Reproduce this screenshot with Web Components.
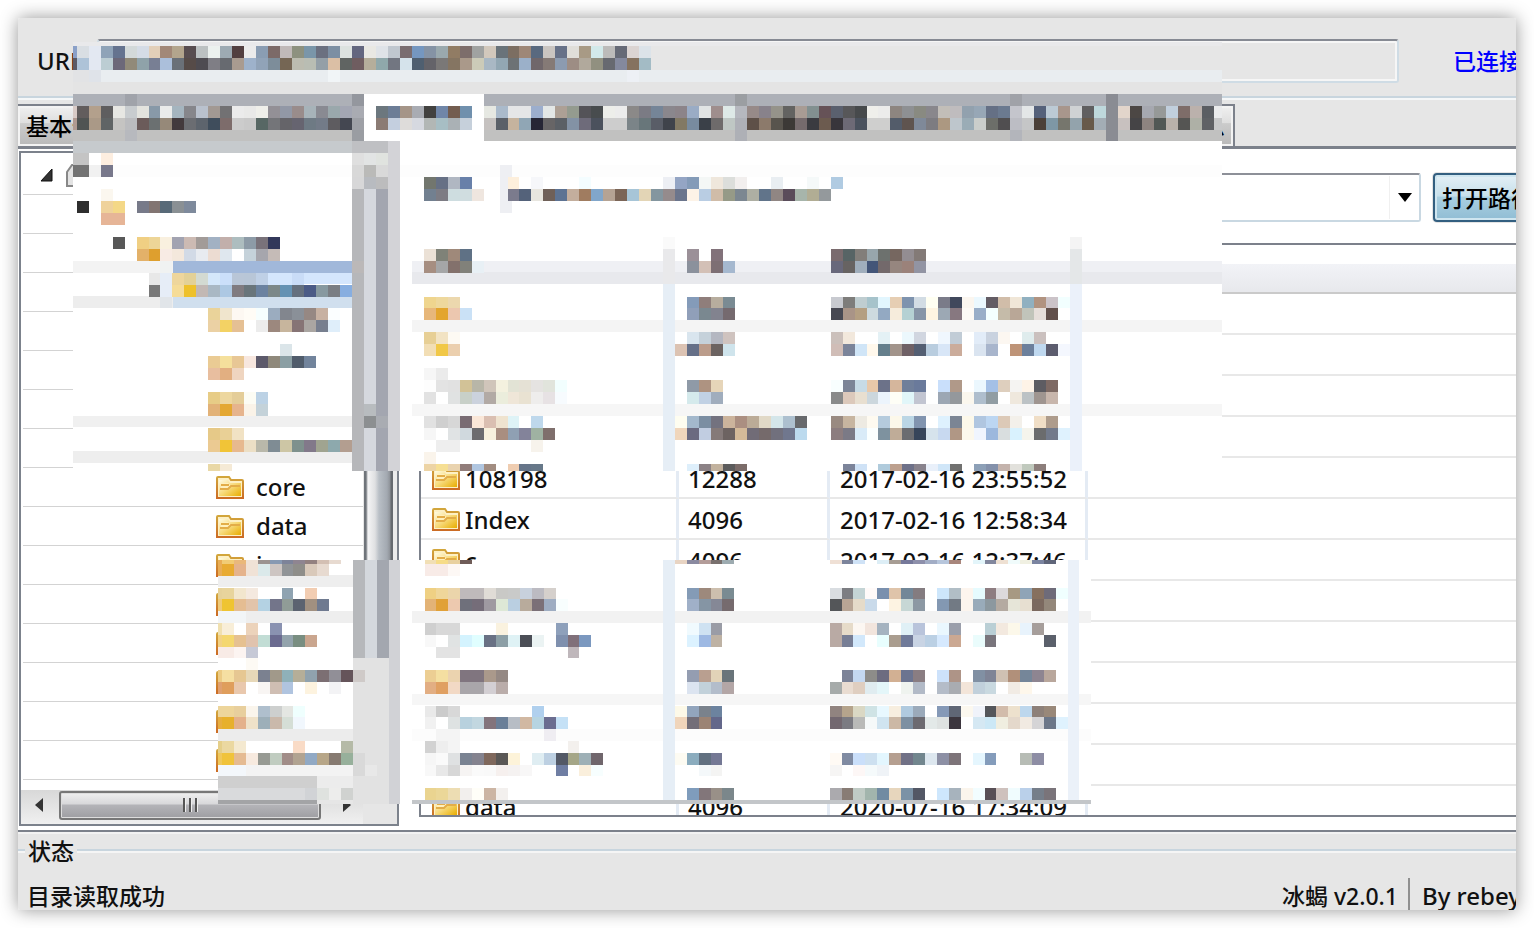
<!DOCTYPE html>
<html lang="zh-CN">
<head>
<meta charset="utf-8">
<title>冰蝎 v2.0.1</title>
<style>
html, body { margin: 0; height: 100%; background: #fff; overflow: hidden; }
body { font: 500 24px/32px "Noto Sans", "Noto Sans CJK SC", sans-serif; color: #111; }
</style>
</head>
<body>
<app-window>
  <url-bar></url-bar>
  <tab-strip></tab-strip>
  <file-manager></file-manager>
  <status-bar></status-bar>
  <pixel-mosaic slot="cover" class="upper" data-name="upper"></pixel-mosaic>
  <pixel-mosaic slot="cover" class="lower" data-name="lower"></pixel-mosaic>
</app-window>
<script>
class ShadowElement extends HTMLElement {
  constructor() {
    super();
    this.attachShadow({ mode: 'open' }).innerHTML =
      '<style>*{box-sizing:border-box}:host{display:block;box-sizing:border-box}</style>' + this.render();
  }
  render() { return ''; }
}

customElements.define('app-window', class extends ShadowElement {
  render() {
    return `<style>
      :host { padding: 18px; height: 100vh; }
      .shadow { height: 100%; border-radius: 2px; box-shadow: 0 0 18px rgba(0,0,0,.42); }
      .frame { position: relative; height: 100%; overflow: hidden; background: #e6e6e6; border-radius: 2px; }
      .content { display: flex; flex-direction: column; height: 100%; margin-right: -60px; }
      ::slotted(file-manager) { flex: 1; min-height: 0; }
      ::slotted(pixel-mosaic) { position: absolute; }
      ::slotted(.upper) { left: 55px; top: 24px; }
      ::slotted(.lower) { left: 200px; top: 542px; }
    </style>
    <div class="shadow"><div class="frame">
      <main class="content"><slot></slot></main>
      <slot name="cover"></slot>
    </div></div>`;
  }
});

customElements.define('url-bar', class extends ShadowElement {
  render() {
    return `<style>
      .bar { display: flex; align-items: center; height: 80px; padding: 8px 0 0 19px; border-bottom: 2px solid #c8d5de; box-shadow: 0 2px #f5f7f8; }
      label { width: 60px; flex: none; }
      input { flex: 1; min-width: 0; height: 44px; font: inherit; background: #e6e6e6; border: 2px solid #cfdce5; border-top-color: #868a93; border-radius: 3px; box-shadow: inset 0 0 0 2px #f6f6f6; }
      span { flex: none; width: 177px; padding-left: 54px; color: #00f; font-size: 23px; white-space: nowrap; }
    </style>
    <div class="bar"><label for="url">URL:</label><input id="url" type="text" readonly><span>已连接</span></div>`;
  }
});

customElements.define('tab-strip', class extends ShadowElement {
  render() {
    return `<style>
      div { display: flex; height: 51px; padding-top: 6px; border-bottom: 3px solid #7c818b; box-shadow: inset 0 2px #f5f7f8; }
      button { font: 500 23px/32px "Noto Sans", "Noto Sans CJK SC", sans-serif; color: #000; height: 42px; padding: 0 8px; border: 2px solid #7c818b; border-width: 2px 2px 0 0; background: linear-gradient(#f0f0f0 0, #dedede 42%, #cbcbcb 44%, #b9b9b9 100%); box-shadow: inset 0 0 0 2px #f3f3f3; white-space: nowrap; }
      .last { width: 1107px; text-align: right; }
    </style>
    <div role="tablist"><button role="tab">基本信息</button><button role="tab" class="last">更新信息</button></div>`;
  }
});

customElements.define('folder-icon', class extends ShadowElement {
  render() {
    return `<style>:host{flex:none;width:28px;height:23px}svg{display:block}</style>
    <svg width="28" height="23" viewBox="0 0 28 23" aria-hidden="true">
      <defs><linearGradient id="g" x1="0" y1="0" x2="1" y2="1"><stop offset="0" stop-color="#fffbe2"/><stop offset=".5" stop-color="#f7d978"/><stop offset="1" stop-color="#e8ad00"/></linearGradient>
      <linearGradient id="s" x1="0" y1="0" x2="0" y2="1"><stop offset="0" stop-color="#d2a63c"/><stop offset="1" stop-color="#cc6c24"/></linearGradient></defs>
      <path d="M1 22V2q0-1 1-1h11l2 3h11q1 0 1 1v17z" fill="#fdf0c4" stroke="url(#s)" stroke-width="2"/>
      <path d="M3 20V4h9l2 3h11v13z" fill="url(#g)"/>
      <path d="M5 7h7l2 2h9v2h-9l-3 2H5z" fill="#fff0bd"/>
      <path d="M5 9h8M4 13h8l3-3h9" fill="none" stroke="#e3ad48" stroke-width="2"/>
    </svg>`;
  }
});

customElements.define('directory-tree', class extends ShadowElement {
  render() {
    const names = { 8: 'core', 9: 'data', 10: 'i' };
    let rows = '';
    for (let i = 0; i < 16; i++) {
      if (i === 0) rows += `<li class="root"><svg width="14" height="14" viewBox="0 0 14 14"><path d="M12 1v12H1z" fill="#333" stroke="#111"/></svg><svg width="28" height="24" viewBox="0 0 28 24"><path d="M1 23V9l5-7h16l5 7v14z" fill="#e3e3e3" stroke="#888" stroke-width="2"/></svg></li>`;
      else if (i < 8) rows += '<li></li>';
      else rows += `<li><folder-icon></folder-icon><span>${names[i] || ''}</span></li>`;
    }
    return `<style>
      :host { display: grid; grid-template: 1fr 34px / 1fr 34px; border: 2px solid #7c828c; background: #fff; overflow: hidden; }
      ul { list-style: none; margin: 0; padding: 3px 0 0 2px; overflow: hidden; }
      li { display: flex; align-items: center; gap: 12px; height: 39px; padding-left: 193px; border-bottom: 1px solid #d3d3d3; }
      .root { padding-left: 17px; }
      .v { background: linear-gradient(90deg,#e6e6e6 0,#e6e6e6 1px,#6f747a 1px,#6f747a 3px,#f4f4f5 5px,#dfe0e2 12px,#b9bfc6 16px,#a3a9b1 24px,#8e9298 27px,#666a70 28px,#666a70 30px,#ececec 30px); }
      .h { display: flex; align-items: center; padding: 0 4px 4px 0; background: linear-gradient(#d8d8d8,#f0f0f0); }
      .h svg { flex: none; width: 38px; height: 14px; }
      .thumb { flex: 1; display: flex; justify-content: center; align-items: center; gap: 4px; height: 29px; border: 2px solid #777; border-radius: 3px; background: linear-gradient(#efefef,#d8d8da 44%,#b4b4b8 48%,#9e9ea2); box-shadow: inset 0 0 0 1px #ddd; }
      .thumb i { width: 2px; height: 14px; background: #555; box-shadow: 1px 0 #eee; }
      .corner { background: #e6e6e6; }
    </style>
    <ul>${rows}</ul><div class="v"></div>
    <div class="h"><svg viewBox="0 0 38 14"><path d="M22 0v14l-8-7z" fill="#333"/></svg><div class="thumb"><i></i><i></i><i></i></div><svg viewBox="0 0 38 14"><path d="M22 0v14l8-7z" fill="#333"/></svg></div>
    <div class="corner"></div>`;
  }
});

customElements.define('file-table', class extends ShadowElement {
  render() {
    const data = {
      4: ['108198', '12288', '2017-02-16 23:55:52'],
      5: ['Index', '4096', '2017-02-16 12:58:34'],
      6: ['c', '4096', '2017-02-16 12:37:46'],
      12: ['data', '4096', '2020-07-16 17:34:09']
    };
    let rows = '';
    for (let i = 0; i < 13; i++) {
      const d = data[i];
      rows += d ? `<tr><td><div><folder-icon></folder-icon>${d[0]}</div></td><td>${d[1]}</td><td>${d[2]}</td><td></td></tr>`
                : '<tr><td></td><td></td><td></td><td></td></tr>';
    }
    return `<style>
      :host { border: 2px solid #7c818b; border-right: 0; background: #fff; overflow: hidden; }
      table { width: 100%; table-layout: fixed; border-collapse: separate; border-spacing: 0; }
      th { height: 49px; padding: 0; background: linear-gradient(#fff 19px,#f2f3f7 19px,#e8e9ed 45px); border-bottom: 2px solid #cacaca; }
      td { height: 41px; padding: 2px 0 0 9px; line-height: 32px; border-bottom: 2px solid #e8e8e8; border-right: 3px solid #e4ebf4; white-space: nowrap; }
      td:first-child { padding-left: 11px; }
      td:last-child { border-right: 0; }
      td:nth-child(3) { padding-left: 10px; }
      div { display: flex; align-items: center; gap: 5px; }
      .name, .time { width: 258px; } .size { width: 151px; }
    </style>
    <table><colgroup><col class="name"><col class="size"><col class="time"><col></colgroup>
    <thead><tr><th></th><th></th><th></th><th></th></tr></thead><tbody>${rows}</tbody></table>`;
  }
});

customElements.define('file-manager', class extends ShadowElement {
  render() {
    return `<style>
      :host { display: flex; gap: 20px; padding: 2px 0 4px 1px; background: #fff; border-bottom: 2px solid #7c818b; }
      directory-tree { flex: none; width: 380px; }
      section { flex: 1; min-width: 0; display: flex; flex-direction: column; gap: 21px; padding: 22px 0 9px; }
      form { display: flex; gap: 12px; height: 49px; margin-left: 84px; }
      .combo { position: relative; flex: 1; }
      select { width: 100%; height: 100%; appearance: none; font: inherit; background: #fff; border: 2px solid #c9d8e2; border-top-color: #8d9098; border-radius: 3px; }
      .combo svg { position: absolute; right: 9px; top: 20px; }
      .combo::after { content: ""; position: absolute; right: 31px; top: 3px; bottom: 3px; width: 1px; background: #f0f0f0; }
      button { flex: none; width: 143px; padding: 0 7px; text-align: left; white-space: nowrap; font: 500 23px/32px "Noto Sans", "Noto Sans CJK SC", sans-serif; color: #000; border: 2px solid #335f80; border-radius: 4px; background: linear-gradient(#e4f0f6,#c7e0eb 46%,#a9cfe0 50%,#90bdd4); box-shadow: inset 0 0 0 2px #cfe6f0, 0 0 0 1px #e4e4e4; }
      file-table { flex: 1; min-height: 0; }
    </style>
    <directory-tree></directory-tree>
    <section>
      <form onsubmit="return false"><div class="combo"><select aria-label="路径"></select>
        <svg width="14" height="9" viewBox="0 0 14 9"><path d="M0 0h14L7 9z"/></svg></div>
        <button type="button">打开路径</button></form>
      <file-table></file-table>
    </section>`;
  }
});

customElements.define('status-bar', class extends ShadowElement {
  render() {
    return `<style>
      :host { height: 78px; padding: 1px 0 0; border-top: 2px solid #f2f2f2; font-size: 23px; }
      .title { display: flex; align-items: center; gap: 3px; height: 32px; }
      .title::before, .title::after { content: ""; height: 4px; border-top: 2px solid #c8d5de; border-bottom: 2px solid #f5f5f5; box-sizing: border-box; }
      .title::before { width: 7px; } .title::after { flex: 1; }
      .line { display: flex; margin-top: 11px; padding-left: 9px; height: 36px; line-height: 36px; white-space: nowrap; }
      .line span:first-child { flex: 1; }
      .by { width: 168px; margin-left: 10px; padding-left: 12px; border-left: 2px solid #909090; font-size: 24px; }
    </style>
    <div class="title"><span>状态</span></div>
    <div class="line"><span>目录读取成功</span><span>冰蝎 v2.0.1</span><span class="by">By rebeyond</span></div>`;
  }
});

/* Each mosaic: size, grid origin and pitch, flat areas [x0,y0,x1,y1,colour], then cell runs "row column colours". */
const MOSAICS = {
  upper: {
    w: 1149, h: 429, x: 3.7, y: 4, px: 11.967, py: 11.93,
    areas: [[0,0,1149,429,'fff'],[0,0,1149,28,'e6e6e6'],[0,0,1149,4,'e9e9eb'],[0,28,1149,40,'e9edf0'],[0,40,1149,52,'e4e4e4'],
      [0,52,1149,64,'adb0b7'],[0,64,1149,76,'d6d6d5'],[0,76,1149,87,'cacac9'],[0,87,1149,99,'c1c1c0'],
      [291,52,411,99,'fff'],[0,99,279,111,'c6cacd'],[279,99,315,111,'bfc0c3'],[315,99,327,111,'d0d3d8'],
      [279,111,315,147,'dadada'],[0,123,1149,135,'fdfdfd'],[0,219,279,231,'f3f3f3'],[0,254,279,266,'ededed'],[0,374,279,385,'f0f0f0'],[0,409,279,421,'eeeeee'],
      [339,219,1149,230,'eff0f4'],[339,230,1149,242,'e8e9ed'],[339,278,1149,290,'f4f4f4'],[339,362,1149,374,'f6f6f6'],
      [590,242,602,429,'e6eef6'],[590,207,602,242,'e9e9eb'],[997,242,1009,429,'ebf1fa'],[997,195,1009,242,'e4e7e8'],
      [279,147,291,429,'b6b7ba'],[291,147,303,429,'d5d8de'],[303,147,315,429,'a3a6b0'],[315,99,327,429,'d3d3d7'],
      [100,219,279,231,'a1b8da'],[100,231,279,242,'d4e6fd'],[100,254,279,266,'d0dfee'],[427,123,439,171,'eeeff3']],
    cells: `0 -1 8aa0c8 d9dee3 e3e8f2 8fa3b8 65738f d3d9d9 d5dce6 e2cfb9 a28878 b3a58d 584d50 bcc1c2 ecf1ef 9daab3 523f40 ebebeb 8a9db3 7c6a68 c0b9b8 8d917f 7a96a9 6b7080 7d8fa3 dde2e0 63667f e9e8e3 dfe3e8 c0c7cf 7a6d70 7597c0 8593a5 9aa9ae 917c64 7d6d6b a0a2a1 d2c8bc 69737a 7c6e62 9e8777 59697f cac5c1 677188 e0ded9 a89a85 d2e9ea bcbbba 666a77 dbd4d2 dce3e9
1 -1 5a5a66 aec3d8 e3e8f2 bccdd3 6c6879 918a79 8fa2a9 787f94 abbfdb 6a7078 564b48 4e4b51 7f7e85 676a70 a99b90 9eb2cb 91a3b8 7d8d9a 756654 bcbcb0 b9bdb3 949fa7 dbbfa5 606462 6f5d60 b5ae9b 8fa8ab 727681 d5e3eb 4f5f70 646369 7a7877 857562 aa998a cccbb8 a9b8c4 92a7b3 6d7275 9bb0c9 70676b 857a76 8c9bb0 9d8d84 b1a99c 919080 676970 84899e 85725f a3bbc5
2 -1 e2e3e5 e2e3e5 dfe3e9
2 21 f1f5f7
2 46 edf0f5
4 4 a0a3aa
4 23 94979e
4 55 9b9ea2
4 78 a0a2a8
4 86 8a8c93
5 -1 d8cac6 625d5d b3a08c 5f5e5f e7e7e3 c8cccf e3e3de 8899a8 eaebea a5b5bf 86868b b9c1cd a29993 727173 ebebeb e9e9e8 efefea 939096 9298a6 998c8b a7b3b9 898a92 9aa8ac a3a6b3 a9abb2 - 6c777e 6c7d96 a59588 a9acb3 42413f 7086a8 735d50 7090ad - e6e8e2 aabacb e5e6e7 e5e6e7 9caecd e3e7e6 ada095 949b8f 545358 484c4e edeeea ececec 8b8988 7b7b84 758598 8a878d 8c8489 9aacc5 e1e4e4 9f8e8d dee9e7 b6b8bf 978a88 88828b 95938a 636361 a89c94 829090 665257 5a606e 575759 474a4c efefeb ececeb 8d8580 8e9093 898a81 89878c c2beb8 bfbcbe 92a1ae 97a7b6 657085 6b7a90 c4c5cc e3e6e7 55617a bccad5 a8968c cfd2d4 605f60 bed8dc 8a8c93 e2d5cb 4c4744 a6a8b0 969998 c1cfdd 7e6d69 bbb1ac 5b5e63 eaebec
6 -1 b09a92 505453 aa9987 606465 c5c4c2 bbbcbf 6b5b5a 6b7071 968979 433a3d 6b6d72 5d646d 3f4d5c 7d6c6b cccccc c9c9c9 576764 747579 656469 666470 6e7a84 737b88 5e5c60 444751 9ea0a6 - 8b7b74 c4cfdf dedcda d6d9e0 b2b7b5 a7bec4 aab1b5 c6d0db - c6c2c0 5b6068 c5b39e 90a6b5 262635 676566 5b6066 8392a5 6e6b7a 4b515d cdcdcd cdcdcd 7b8488 68767a 595d67 3f434b 827964 788b9f 3a4048 6e6b6b bfc7c4 aeb0b7 5e5048 8c7a6b 58544d 3c3936 756b6d 3a3b40 6c5b4f 38353b 6d6a76 4a525e cfcfce cfcfce 535c6a 5f544f 7f8999 7d7c81 ac9881 bec6cc 9aacb6 cacecb 6c6e69 504e50 bcbdc4 c5c6c7 4b4038 7e97a5 76766d 93a3ac 67594a a3adb5 8a8c93 c8c1bf 454446 8e8480 525855 b9b1aa 555553 aeb0a6 5f6165 c8c9ca
7 4 b7b9be
7 23 9a9da2
7 55 aeb0b6
7 78 b3b5bb
7 86 8a8c93
9 -1 c4c4c4 c4c4c4 - fdeee0
9 23 dfdfdf e2e4e4 e0e3df
10 -1 737373 737373 f1f1f1 78788b
10 23 d8d8d8 babab8 d9d9d9
11 23 d7d7d8 b8bbc0 bcbcbd
12 2 fbf7ef
13 0 2e2e2e - efd29b f4d887 - 777a89 827572 586a78 8a9094 7e8a9c
14 2 e6b597 e6b597
16 3 585858 - f0cf83 edd597 f9f0df a2a3b1 ccbab3 a29b98 a2b1c3 c2afab adbdbf 8d9ba7 79727a 32385a
17 5 e3b169 de9f2e f8ebe4 f4e8dc d2dae6 e8ebf0 ecdcd2 dfe7ee ffffff c5d2da a6a6ad c5bbb7
18 7 f0f2f2
18 23 bbb8b8
19 6 e8e8e8 e6edf7 eed69c e3d197 d3dad2 d4e7fa cbdffa b9c6d7 b8c6d7 bfd0e6 d4e6fd d4e6fd c9dcf7
20 6 797979 e6edf7 f5dc98 eec12b c2b8b4 a9b8c4 adc8e3 807b80 69757b 6b82a0 7c8889 6592b3 65707e 4b5b86 8799a0 7a7e84 87aee0
21 7 e1e5e9
22 11 ead39a f0e5cd fdf8f2 fffcf6 f6fefe 9bacbf 82868e 8a9098 968883 c7b1a2 fbfeff
23 11 ebd1a4 f3d264 e5c094 - ececec 9c887e c7b59d 867475 aaa6a2 777f8f dfeefa
25 17 dbe5e9
26 11 eacb94 f5e09c e8c795 f7e7df 5d5a6b 8f897b 8b9fa4 505c6b 72849c
27 11 e8be9f e2af81 efd5c0
29 11 e7cc86 edd79f e4cd98 fcfcf4 bcd2e5
30 11 e2b278 e4a833 e6b48d faf3e8 c4d2d9
30 24 b8bcbf
31 24 8c8f91 a9acb2
32 11 e6c988 e9d096 f1e2c4
33 11 ebca92 f1c437 e7b98f ecdfc5 b9b8aa 7f8c94 cdc6a5 7e918d 82798a a0a490 8da9ad b39e90
35 11 e9d8a6 f5ead6
11 29 72766e 667085 b0b7c2 6880a9
11 36 fdefdc - f6f7fa - - - f4fdff
11 49 edeff4 94a5c4 849bb8 f4f7f6 efe7dc dcdedb f2efee - - e9eef2
11 61 f5f9f9 - b0cbe2
12 29 728090 7d7c84 cedde0 d0dde0 efe6df
12 36 7b7b8d 54627a e8e6df 6f6058 5d7393 c3ae9d a07c60 81a6ca b5a394 7b6557 a7c5d7 e3d5b6 84969f 958b8c 6b758c fdf3e7 b9cde3 d0bca8 969a87 7c8791 aeafa3 61748a 908683 5a4c5a a7b5ab b1ad94 94999c
16 49 fafafa
16 83 f4f4f4
17 29 ebe1d6 7f8278 9f897a 5f7185
18 29 a68e81 a5a6a7 83716c 81817a e8f0f5
17 51 9b9098 - 82727a
18 51 8b919c d3c0b6 7d6f74 a5b8cf
17 63 7a6b6e 576465 827e7a 98a6ac 6d716e 766760 938d92 837a77
18 63 68687b 676362 a0aebc 435578 73696b 96867f 9b827a 9294a3
21 29 efd58e eed89d ecd8ae
22 29 e7b77a e3a52e ecc7af cae1f6
24 29 e7cf95 f2e3c3 fdfaf3
25 29 f2deb5 f1c847 ebcfae
27 29 f6f6f6 ebebeb
28 29 fdfdfd e3e3e3 e1e1e1 d2c297 b8b6a8 d0c5ba f4f1df e2e3d5 e5e1d5 e5e3e1 e1e4dc f2fefe
29 29 e2e2e2 ffffff e0e2e2 c8d0c8 cbd2dd b2aaa5 ebeddc efe6d8 e9e2d2 eeedec e7e2e4 f7fbfe
31 29 e1e1e1 cfcfcf d7d7d7 796c73 fae7d8 dabfb1 efe3cf def3f7 ffffff bed8ec
32 29 f6f6f6 ffffff e0e3e4 d0d9de 6c6c6f f8f1dd a98e80 8fa0b3 83839a 9fb2a2 7f6f6c
33 30 eeeeee eeeeee
33 38 f7f3ec
34 29 faf4eb
35 29 edd4a5 f6df94 e9d3af 917d7a b0c6e0 a28d81 ffffff efcdb1 667589 677889
21 51 849bb9 8f7e7b b7ad9e 7a8b93
22 51 909fb9 7a8890 82838f 756a6f
24 51 d9e5ee c5d1da b4b7c1 cfc3bf
25 50 dcc3b3 667088 bb9c8b 6c6361 cfe4ec
28 51 8f9aa7 ae9381 e6d5b9
29 51 d5eaec c1d1e4 a0adbd
31 50 fefdf0 a3b8cc 7b8ea2 73727f ccb49c ab8f81 bbab97 e1d9c7 d4e6ea adc0cf 67696c
32 50 f0d6bc 6b6a80 c1cde1 857a79 6d6361 d4ba99 716c77 756a6b 71707d 70778e bcdaee
35 51 deeffb 8c8286 c2b29e 5c5c5c 7b6c69
21 63 c8cad0 7e7d7b bfcdd0 a6c3cb e2f6fe e6ceb3 7e93ae d2dce4 fffff2 7a7b89 40485c fbf6ef ebf8fe 635c64 d1bda9 f0e6d7 90b0c0 b19380 cbc3c8 f2ffff
22 63 474852 a99487 b49f82 cddadf 93a9c2 f6ecdc b5d1d3 8795a7 fef5e2 9ca8b4 877880 fdfaf5 99aec8 f4ffff c5bba9 b9a797 c1c4ba e6deda 62504b
24 63 cbc0bb f2e8dc - - e4f1f5 - ecf8fd d1d6e0 - f0f7fe c1ccd6 - e2ecf8 c9d2df fcf7f1 - dfeced cac0be
25 63 d0bdb7 7b849a d0e5f7 fff8ec 657f8c a2948b 6f6166 545f73 b9cddf d8e6f7 cbac9b - dae4f0 a8b5cc - be9478 6c809c bfd8ef 5c5c6e f4f7fe
28 63 f8fefe 7c8597 c7dbe6 e8c8a9 6c7289 d5b69c 707f9a 6a7a9b - c9dffb b09989 - ebf7fe a4c0e6 decfbe f5f4f2 fef3e7 5d5c62 7e6a64
29 63 898a8a dcc9bb e8dfd0 ccd7dd ecf4fc fefef6 e1f6f9 c2c5d1 - 9ca7b4 94989c fbf7ee afbecd 919da3 - efe8dd bcc2c5 9f9590 c8b6ac
31 63 998a81 c7b5a0 edeae2 fefaf0 b5cbdd fcf8ea bbd6e5 8194af - def1fe 7b8594 fcf8ea b0c6e0 bcd6f2 dcc9b7 f3f0ea - f0dec6 ae9c8c
32 63 8c7d7f 7b7a86 d9ebf8 fbffff 7e929f bfac98 6b6c70 37455a d6e3ec c8d9f0 b09785 fcf8ec f0f5fe 9cb8dd d9dedf d9f2fe f5f4ec 6b6c6d 727a8b dff2fe
35 64 7c849a cfe2f6 - b0cbdc bda08e 6e7189 89838d e9f0fa d0e6f8 717170 - 8da0b7 8491ab c4b3ac e2e1dc c0c9bd 8c7e7b`
  },
  lower: {
    w: 873, h: 244, x: 4, y: 4, px: 11.915, py: 11.8,
    areas: [[0,0,873,244,'fff'],[0,15,135,27,'eeeeee'],[0,51,135,63,'eeeeee'],[0,169,135,181,'ececec'],[0,204,135,216,'f3f3f3'],
      [0,216,99,228,'cfcfcf'],[99,216,135,240,'ececec'],[0,228,99,240,'d9dadc'],[0,240,99,244,'a3a4a6'],[99,240,135,244,'e6e6e6'],
      [135,0,147,98,'b6b8bb'],[147,0,159,98,'d4d8dd'],[159,0,171,98,'a3a7af'],[135,98,171,244,'e2e2e2'],[171,0,182,244,'d1d2d6'],
      [194,51,873,63,'f2f2f2'],[194,134,873,145,'f6f6f6'],[194,169,873,181,'fcfcfc'],
      [445,0,457,244,'e6eef6'],[850,0,861,244,'ebf1f9'],[194,240,873,244,'c3c6c9']],
    cells: `-1 -1 e9ad55 f1cc75 eab87a f0e2d6 9c9390 8799b2 7d8399 8f8591 938180 d3bfb3 e7dad0
0 -1 e9ad55 e8ab32 e5b38c f0e2d6 dbe9ea cdc5c2 919497 8f8e8a d9c9ba e7dad0
2 -1 e6d29a e8d49c f2e6cd f4e9df - - 8fa3b1 - f2cdb2
3 -1 efcb7a efc432 e5bd92 e2c4aa b4d2e3 73758a 909c97 5c6370 a19080 6f7a90
4 -1 f2f5f7 f2f5f7 f2f5f7
5 -1 f0e0b0 f8eed8 - ecd3bb - 8a92b1
6 -1 f3d283 f4d76f e6c191 e0c3ae c2ddd5 6b6b90 93a3ac 798e81 caa68f
7 -1 f8ebe6 f8ebe6 fcf4f1 c6c9d6
8 2 fdfaf4
9 -1 eccb85 f5dfa2 e6c792 e7d8b8 7b8190 a1998a 8fb1b9 b5ae98 90a2ae 7c6f73 918f97 65545a cfcac8
10 -1 dfa070 df9e5c e9c8ad - f8f5f3 cfbeb3 b0c4df - fdf3df - f3f3f5
12 -1 edd59b edd59b e8cf9d faf5ec afbfcd cdcfce e4e6e2 effffe
13 -1 e8ae3f e7b02c e4b18b efe2c9 9dafb9 cab9ab d5ded6 f1f7fd
15 -1 e5cf8a ebd8a1 f4e9d0 - - - - f9dbc6 - - - b5baa7
16 -1 f0c85b f0c33b e5bb92 f7eadf 979a93 c0ccc0 a18d88 b1a391 91a9c4 b7a688 867a71 97b09b d9d9d9
17 -1 f3f7fb f3f7fb f3f7fb
17 11 d9d9d9 e8e8e8
19 7 d1d3d6 dfe2df ededec d0d2d0
-1 17 f1dfb5 f6dc88 e8d1a0 6f5c58
-1 38 e8d4c3 8a8aa0 b39c99 79706e 9dabb0
-1 51 efe0d5 7c849b cfe2f6 - ddeef6 a79d94 76799a 8e90ab a2adc5 b7c6dc a8867c - e3f5fa 82879d eee0d2 f0fbfb f0f0e2 7b84a0 5f6579
0 17 f8ebe7 f8ebe7 fdf8f5
2 17 efd083 efd69a ebd5ab bfbabb bfbabb e0dcd6 c9c9c6 c9cac9 c8d1dd bcbbc2 d5d0cc
3 17 e3b376 e1a138 edc9af 6f707b 756d79 9f9aa1 dde8d6 bacfe1 b8ab9c 7b7077 9eadc2 f8fefe
5 17 cfcfcf d8d8d8 d8d8d8 - - - faf2df - - - - 8ea0bb
6 17 f8f8f8 ffffff e0e3e3 d4f3fe e0feff 697184 8c9fa6 dff2f5 4b4e56 ebf3f3 ffffff 7f90ae 80707a 7b98bf
7 18 e3e3e3 e3e3e3
7 29 bfb7bb
9 17 ecce93 f4dfa1 ebd3af 80757f 80757f aa998b 958984
10 17 e2ae83 e0a062 f2d9c5 a9a6aa a9a6aa d3cfd3 baadaa
12 17 e9e9e9 cbcbcb d8d8d8
12 26 b0d0ee
13 17 f1f1f1 ffffff dee2e2 b8d1de c2d7e0 83747c 6a7f98 b7bdc5 d1b8a2 b6d4e1 6b6d90 c5e1f6
14 18 f4f4f4 f4f4f4
14 27 efedf2
15 17 d2d2d2 eeeeee f4f4f4
15 29 f3f0ed
16 17 f6f6f6 fafafa dfe1e2 7a8392 84838f 7f685c 5a5856 fdf3d9 ffffff dfedf2 bdd0e2 535966 a5a687 9eb0b6 70666c
17 17 f8f8f8 e8e8e8 d7d7d7 f6f4f3 fafafa f9f9f9 f6f0ee f5f2f1 f8f7f7
17 28 6f7ea3 - faefdc f7fefe
19 17 ead490 ebd798 edddb3 f2efed fffef8 ccb5a4 f3f0ee
2 39 849bb6 9d897c cdbfae 7a8b92
3 39 a0b0c8 8595a4 858896 766b6e
5 39 f0fafe cfe2f2 9a9ca6
6 39 dcf2ff 9eb9e3 beb2a4
9 39 949db1 b99f90 e2d3b8 69747a
10 39 dce4f0 c2d1da b3bdcb b3a6a6
12 38 fdf9e8 92a5bd 7a828c 6c839f
13 38 f0d5bb 736e78 9b8374 63678a
16 38 fdfbf2 8bacbe 617080 747894
17 40 f4f8fa f4f4f3
19 39 7f9cbc 82767a 999088 7b878b
2 51 d9dde1 7c7d82 c4d4d5 fffaf9 7a90ae dfc4aa 728798 847c80 - cde6fb b1bec6 fdf5ee e6fbfe 8e7d81 dcd9db a79983 8fa4b7 86705f 6e6b79 f0ffff
3 51 545659 b8a595 e5dbc9 c9daea - fdf3e2 c7d7d5 8c98a3 - 8398b2 727a84 fcf5ee 99abba 8c989f b4aaa1 e6e5d8 e7dfd1 7b695f 93877a
5 51 b9aaa4 e6dbc9 fcf7f2 f2e5dd a5b3c0 - e0f0f6 b9c4db - eaf7fe 9b9fab - - bacfd5 f3e9df fcf8ea e8f3fc a69e9b
6 51 b9aaa4 777e95 d2e8fb - e8fefe aa9d8f 707a99 c9d4e4 bbd0e4 d6e9fe cba892 - eafcfc 79757c - - - - 5b606b
9 52 7c8398 c4d8f1 8d8c89 6d6c80 d2b093 6c7490 8a7d82 - cde2fb ae9487 - 8190a3 7f8496 cfc1b3 b1907a 758699 8e8591 b9a79c
10 51 a6abaa e9dcd1 dfcec0 e0ecf0 e4f6f9 - eff3ef b2bac7 - b4bcc8 a9acb1 f3e5d9 c1d0db c9d9e0 - f1ebe4 fef7eb
12 51 918480 b5a48c dad8c4 cfe3e5 e8f8ff f7eedf b0cadf 9baaba - 8599b7 5f6675 fcf8ef f0f3fa 54565b d2bcab ede1cd bdd7ed 8d8079 998879
13 51 736870 7b7b82 b9bab8 f5f9f9 d0e4f0 ccb8a5 7d90a2 6c6a70 e3e9e8 dee2e1 3c363e - d5e8f3 cce8f6 f0eee0 e4d8cb f1eae2 d5d4d6 6c7789 dff2fe
16 51 fffaf4 808ba2 cadffa cde0f0 e3f6fe b59f90 717186 72868e dde7ef 8d90a5 7d7479 - e5f6fe 849cbb - - b7bcb5 8d8da4
17 51 f6f5f4 - fdf7f6 f5fafb eff3f7
19 51 abaaae 887c75 c0cbc5 a2b5ad 718ba2 e7d6bd 7b92a6 535765 - cee7fd a7b3bd fbf5ec f2fdff 584f56 cec1bd f0fcfe bad0ea 757e8a 7a747a`
  }
};

customElements.define('pixel-mosaic', class extends ShadowElement {
  connectedCallback() {
    const m = MOSAICS[this.dataset.name];
    const rect = (x0, y0, x1, y1, c) => `<rect x="${x0}" y="${y0}" width="${x1 - x0}" height="${y1 - y0}" fill="#${c}"/>`;
    let out = m.areas.map(a => rect(...a)).join('');
    for (const run of m.cells.split('\n')) {
      const [row, col, ...colors] = run.trim().split(' ');
      const y0 = Math.max(0, Math.round(m.y + row * m.py));
      const y1 = Math.min(m.h, Math.round(m.y + (+row + 1) * m.py));
      colors.forEach((c, i) => {
        if (c === '-') return;
        const k = +col + i;
        out += rect(Math.max(0, Math.round(m.x + k * m.px)), y0, Math.min(m.w, Math.round(m.x + (k + 1) * m.px)), y1, c);
      });
    }
    this.shadowRoot.innerHTML = `<style>:host{display:block}svg{display:block}</style>
      <svg width="${m.w}" height="${m.h}" viewBox="0 0 ${m.w} ${m.h}" shape-rendering="crispEdges" aria-hidden="true">${out}</svg>`;
  }
});
</script>
</body>
</html>
